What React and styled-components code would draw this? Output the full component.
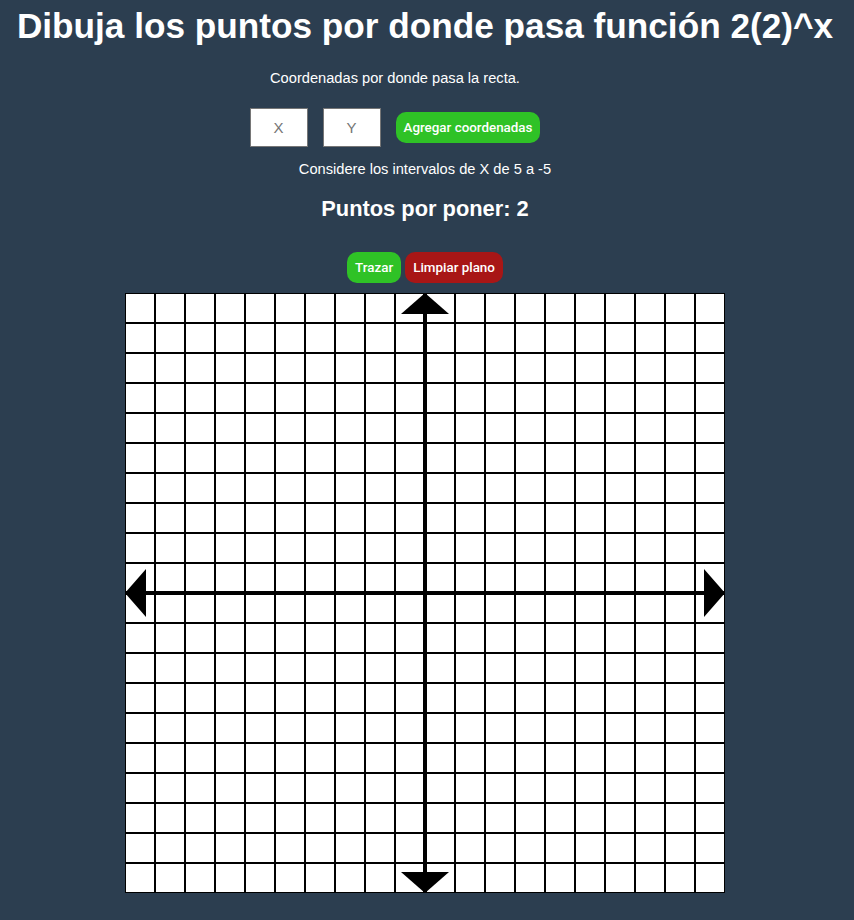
import React, { useState } from "react"
import styled, { createGlobalStyle } from "styled-components"

const GlobalStyle = createGlobalStyle`
  html, body {
    margin: 0;
    padding: 0;
    background: #2c3e50;
  }
  body {
    font-family: "Liberation Sans", Arial, sans-serif;
    color: #fff;
  }
`

const Page = styled.div`
  width: 850px;
  min-height: 920px;
  display: flex;
  flex-direction: column;
  align-items: center;
  text-align: center;
`

const Title = styled.h1`
  margin: 6px 0 0;
  font-size: 35.2px;
  line-height: 40px;
  font-weight: 700;
  white-space: nowrap;
`

const Shifted = styled.div`
  align-self: stretch;
  padding-right: 60px;
  display: flex;
  flex-direction: column;
  align-items: center;
`

const Note = styled.p`
  margin: ${p => p.top}px 0 0;
  font-size: 14.65px;
  line-height: 18px;
`

const InputRow = styled.div`
  margin-top: 21px;
  display: flex;
  align-items: center;
  gap: 15px;
`

const CoordInput = styled.input`
  box-sizing: border-box;
  width: 58px;
  height: 39px;
  border: 1px solid #767676;
  background: #fff;
  padding: 0;
  text-align: center;
  font-family: "Liberation Sans", Arial, sans-serif;
  font-size: 15px;
  color: #000;
  outline: none;
  &::placeholder { color: #757575; }
`

const Button = styled.button`
  height: 31px;
  padding: 0 8px;
  border: none;
  border-radius: 10px;
  background: ${p => p.color};
  color: #fff;
  font-family: Roboto, "Liberation Sans", sans-serif;
  font-weight: 500;
  font-size: 13.4px;
  cursor: pointer;
`

const Counter = styled.h2`
  margin: 18px 0 0;
  font-size: 21.85px;
  line-height: 26px;
  font-weight: 700;
`

const ButtonRow = styled.div`
  margin-top: 30px;
  display: flex;
  gap: 4px;
`

const Plane = styled.svg`
  display: block;
  margin-top: 10px;
  background: #fff;
`

const SIZE = 600
const CELL = 30
const MID = SIZE / 2

const Grid = () => {
  const ticks = Array.from({ length: SIZE / CELL + 1 }, (_, i) => i * CELL)
  return (
    <Plane width={SIZE} height={SIZE} viewBox={`0 0 ${SIZE} ${SIZE}`}>
      {ticks.map(t => (
        <g key={t} stroke="#000" strokeWidth="2">
          <line x1={t} y1="0" x2={t} y2={SIZE} />
          <line x1="0" y1={t} x2={SIZE} y2={t} />
        </g>
      ))}
      <g stroke="#000" strokeWidth="4">
        <line x1={MID} y1="0" x2={MID} y2={SIZE} />
        <line x1="0" y1={MID} x2={SIZE} y2={MID} />
      </g>
      <g fill="#000">
        <polygon points="276,21 324,21 300,0" />
        <polygon points="276,579 324,579 300,600" />
        <polygon points="21,276 21,324 0,300" />
        <polygon points="579,276 579,324 600,300" />
      </g>
    </Plane>
  )
}

const App = () => {
  const [x, setX] = useState("")
  const [y, setY] = useState("")

  return (
    <Page>
      <GlobalStyle />
      <Title>Dibuja los puntos por donde pasa función 2(2)^x</Title>

      <Shifted>
        <Note top={23}>Coordenadas por donde pasa la recta.</Note>
        <InputRow>
          <CoordInput placeholder="X" value={x} onChange={e => setX(e.target.value)} />
          <CoordInput placeholder="Y" value={y} onChange={e => setY(e.target.value)} />
          <Button color="#2fc226">Agregar coordenadas</Button>
        </InputRow>
      </Shifted>

      <Note top={13}>Considere los intervalos de X de 5 a -5</Note>
      <Counter>Puntos por poner: 2</Counter>

      <ButtonRow>
        <Button color="#2fc226">Trazar</Button>
        <Button color="#a81616">Limpiar plano</Button>
      </ButtonRow>

      <Grid />
    </Page>
  )
}

export default App
